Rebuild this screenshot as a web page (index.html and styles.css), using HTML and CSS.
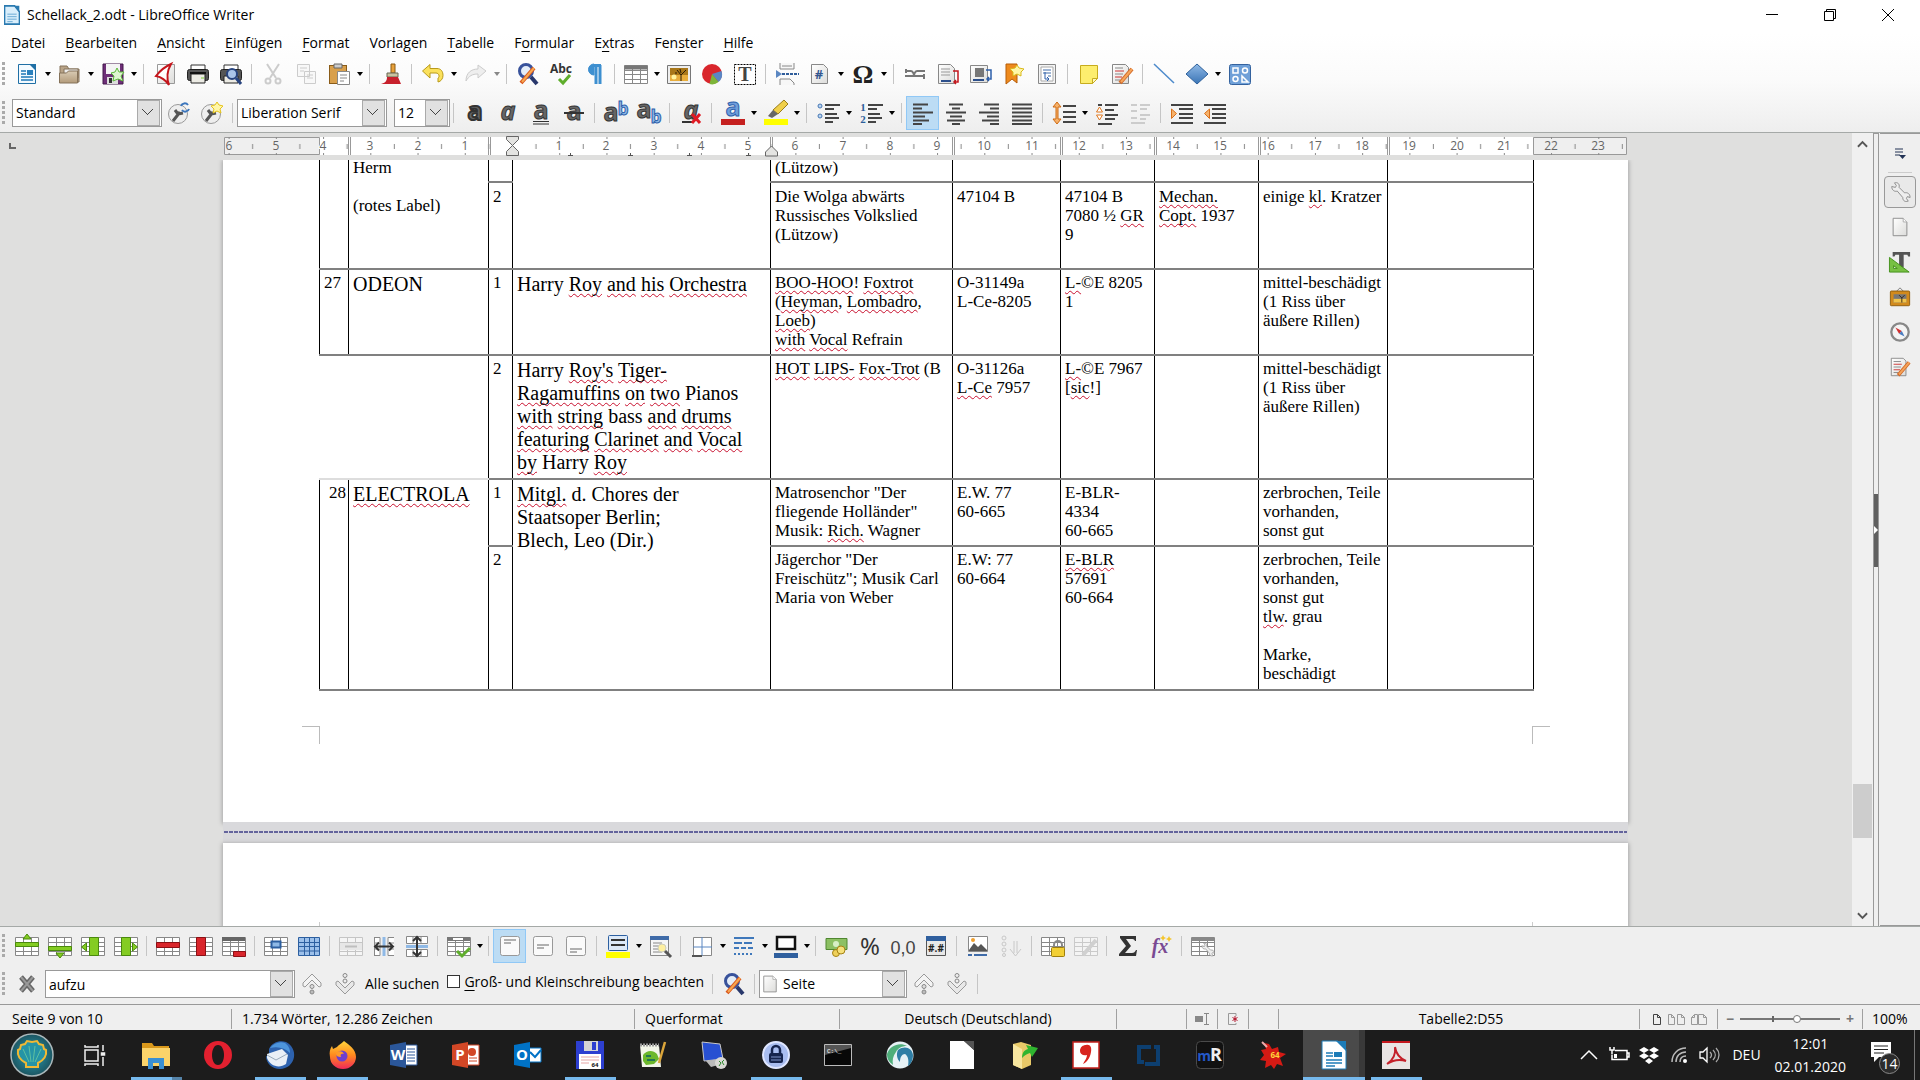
FILE: index.html
```html
<!DOCTYPE html>
<html lang="de">
<head>
<meta charset="utf-8">
<title>Schellack_2.odt - LibreOffice Writer</title>
<link rel="stylesheet" href="styles.css">
</head>
<body>
<svg class="defs" aria-hidden="true">
  <defs>
    <linearGradient id="gBlue" x1="0" y1="0" x2="0" y2="1"><stop offset="0" stop-color="#8fb9e6"/><stop offset="1" stop-color="#3a74b5"/></linearGradient>
    <linearGradient id="gTan" x1="0" y1="0" x2="0" y2="1"><stop offset="0" stop-color="#d9cbb4"/><stop offset="1" stop-color="#b39b7b"/></linearGradient>
    <linearGradient id="gPaper" x1="0" y1="0" x2="1" y2="1"><stop offset="0" stop-color="#fff"/><stop offset="1" stop-color="#dcdcda"/></linearGradient>
    <radialGradient id="gShell"><stop offset="0" stop-color="#2aa0b5"/><stop offset="1" stop-color="#1c5561"/></radialGradient>
    <linearGradient id="gFire" x1="0" y1="0" x2="0" y2="1"><stop offset="0" stop-color="#ffd43c"/><stop offset=".5" stop-color="#ff8a1e"/><stop offset="1" stop-color="#f0285a"/></linearGradient>
  </defs>
  <symbol id="grid" viewBox="0 0 24 24"><path d="M.5 3.500h23v18H.5z" fill="#fff" stroke="#888"/><path d="M.5 8.500h23M.5 12.500h23M.5 17.500h23M8.500 4v17M16.500 4v17" stroke="#888" fill="none"/></symbol>
  <symbol id="find" viewBox="0 0 24 24"><circle cx="10" cy="9" r="6.500" fill="#e4edf8" stroke="#38529b" stroke-width="3"/><path d="M15 15l6 7" stroke="#28376b" stroke-width="4"/><path d="M5 21L18 6" stroke="#d9571c" stroke-width="4"/><path d="M6 20L18 6" stroke="#f7a750" stroke-width="2"/></symbol>
  <symbol id="up" viewBox="0 0 24 24"><path d="M3 11L12 2l9 9v3l-2 1-7-7-7 7-2-1z" fill="#f4f4f4" stroke="#999"/><circle cx="12" cy="14.500" r="2" fill="#ddd" stroke="#888"/><circle cx="12" cy="20" r="2" fill="#bbb" stroke="#888"/></symbol>
  <symbol id="down" viewBox="0 0 24 24"><path d="M3 13l9 9 9-9v-3l-2-1-7 7-7-7-2 1z" fill="#e8e8e8" stroke="#999"/><circle cx="12" cy="9" r="2" fill="#eee" stroke="#888"/><circle cx="12" cy="3.500" r="2" fill="#eee" stroke="#888"/></symbol>
  <symbol id="wrench" viewBox="0 0 24 24"><path d="M3 6c0 4 3 6 6 5l6 7c0 4 3 5 6 4l-2-3 1-2 3 1c0-4-3-6-6-5l-6-6c1-4-2-6-5-5l2 3-1 2z" fill="#eee" stroke="#888"/></symbol>
  <symbol id="paper" viewBox="0 0 24 24"><path d="M4.500 2.500h11l4 4v15h-15z" fill="url(#gPaper)" stroke="#888"/><path d="M15.500 2.500v4h4" fill="#fff" stroke="#aaa"/></symbol>
  <symbol id="track" viewBox="0 0 24 24"><path d="M2.500 2.500h13l3 3v16h-16z" fill="url(#gPaper)" stroke="#888"/><path d="M5 6h8M5 12h8M5 18h5" stroke="#888"/><path d="M5 9h9M5 15h7" stroke="#c33"/><path d="M10 21L22 7" stroke="#d36a28" stroke-width="4"/><path d="M11 20L22 7" stroke="#f5a45a" stroke-width="2"/></symbol>
  <symbol id="writer" viewBox="0 0 24 24"><path d="M3.500 2.500h12l5 5v14h-17z" fill="#f3faff" stroke="#1f6fa5"/><path d="M14 2l7 7V2z" fill="#1f6fa5"/><path d="M6 9h5M6 12h5M6 15h12M6 18h12" stroke="#1f78b8" stroke-width="1.500"/><path d="M12 8h6v5h-6z" fill="#2a80bd"/></symbol>
</svg>

<header class="chrome">
  <div class="titlebar">
    <svg class="app" viewBox="0 0 24 24" preserveAspectRatio="none"><path d="M1 1h15l7 7v15H1z" fill="#d9eefb" stroke="#2a7ab0" stroke-width="2"/><path d="M15 1l8 8V1z" fill="#2a7ab0"/><path d="M5 11h14M5 14h14M5 17h14M5 20h8" stroke="#4b97c8"/></svg>
    <h1>Schellack_2.odt - LibreOffice Writer</h1>
    <div class="winctl">
      <button aria-label="Minimieren"><svg viewBox="0 0 14 14"><path d="M1 6.500h12" stroke="#000"/></svg></button>
      <button aria-label="Verkleinern"><svg viewBox="0 0 14 14"><path d="M1.500 3.500h9v9h-9zM3.500 3V1.500h9v9H11" fill="none" stroke="#000"/></svg></button>
      <button aria-label="Schließen"><svg viewBox="0 0 14 14"><path d="M1 1l12 12M13 1L1 13" stroke="#000"/></svg></button>
    </div>
  </div>
  <nav class="menu">
    <a href="#"><u>D</u>atei</a><a href="#"><u>B</u>earbeiten</a><a href="#"><u>A</u>nsicht</a><a href="#"><u>E</u>infügen</a><a href="#"><u>F</u>ormat</a><a href="#">Vor<u>l</u>agen</a><a href="#"><u>T</u>abelle</a><a href="#">F<u>o</u>rmular</a><a href="#">E<u>x</u>tras</a><a href="#">Fen<u>s</u>ter</a><a href="#"><u>H</u>ilfe</a>
  </nav>
  <div class="bar">
    <i class="grip"></i>
    <button class="b"><svg viewBox="0 0 24 24"><use href="#writer"/></svg></button><button class="dd"></button>
    <button class="b"><svg viewBox="0 0 24 24"><path d="M2 20V4h7l2 3h10v13z" fill="#b8a387" stroke="#85725a"/><path d="M6 7h14v9H6z" fill="#eee" stroke="#85725a"/><path d="M1.500 11h7l2-2h9v12h-18z" fill="url(#gTan)" stroke="#85725a"/></svg></button><button class="dd"></button>
    <button class="b"><svg viewBox="0 0 24 24"><path d="M2 2h20v20H2z" fill="#6e2f78" stroke="#43184b"/><path d="M5 2h14v10H5z" fill="#f4f4f4"/><path d="M6 15h11v7H6z" fill="#ddd"/><path d="M8 16h3v5H8z" fill="#333"/><path d="M16 6l2 4 5 0-3 4 2 5-5-2-5 2 1-5-3-3 4-1z" fill="#dff5d0" stroke="#5cb83a"/></svg></button><button class="dd"></button>
    <i class="sep"></i>
    <button class="b"><svg viewBox="0 0 24 24"><path d="M4.500 2.500h17v19h-17z" fill="url(#gPaper)" stroke="#999"/><path d="M18 2C9 6 6 10 3 14c5 1 9 3 13 9-3-8-2-14 2-21z" fill="#fff" stroke="#c4161c" stroke-width="2"/></svg></button>
    <button class="b"><svg viewBox="0 0 24 24"><path d="M5 3h14v5H5z" fill="#fff" stroke="#333"/><rect x="1.500" y="7.500" width="21" height="11" rx="2" fill="#555" stroke="#222"/><path d="M5 12h14v9H5z" fill="#ecebe4" stroke="#222"/><path d="M4 11h16" stroke="#111" stroke-width="2"/><path d="M15 16h3" stroke="#7c3"/></svg></button>
    <button class="b"><svg viewBox="0 0 24 24"><path d="M5 3h14v5H5z" fill="#fff" stroke="#333"/><rect x="1.500" y="7.500" width="21" height="11" rx="2" fill="#555" stroke="#222"/><path d="M5 14h14v7H5z" fill="#ecebe4" stroke="#222"/><circle cx="13" cy="12" r="5" fill="#aac4e8" stroke="#28447f" stroke-width="2"/><path d="M17 16l5 6" stroke="#28447f" stroke-width="3"/></svg></button>
    <i class="sep"></i>
    <button class="b" disabled><svg viewBox="0 0 24 24" fill="none" stroke="#ccc" stroke-width="2"><path d="M6 2l9 14M18 2L9 16"/><circle cx="7" cy="19" r="2.500"/><circle cx="17" cy="19" r="2.500"/></svg></button>
    <button class="b" disabled><svg viewBox="0 0 24 24" fill="#f8f8f8" stroke="#ccc"><path d="M3.500 2.500h12v12h-12zM10.500 9.500h11v12h-11zM6 6h7M6 9h4M13 13h6M13 16h6"/></svg></button>
    <button class="b"><svg viewBox="0 0 24 24"><rect x="2.500" y="3.500" width="17" height="18" fill="#d9a04c" stroke="#8a5c19"/><path d="M7 2h8v4H7z" fill="#ccc" stroke="#666"/><path d="M10.500 9.500h12v13h-12z" fill="#fff" stroke="#888"/><path d="M13 13h7M13 16h7M13 19h4" stroke="#888"/></svg></button><button class="dd"></button>
    <i class="sep"></i>
    <button class="b"><svg viewBox="0 0 24 24"><path d="M12 2h4v9h-4z" fill="#e8a13a" stroke="#8a5a12"/><path d="M8 11h11v4H8z" fill="#c9c3a0" stroke="#665"/><path d="M8 15h11l3 7H2c4-1 6-3 6-7z" fill="#c7202c"/></svg></button>
    <i class="sep"></i>
    <button class="b"><svg viewBox="0 0 24 24"><path d="M1.500 9L9 2.500v4h7c4 0 6 3 6 7 0 3-2 6-5 6.500v-4c2-1 1-5-2-5H9v5z" fill="#fbe15c" stroke="#b99a1a"/></svg></button><button class="dd"></button>
    <button class="b" disabled><svg viewBox="0 0 24 24"><path d="M22 9l-8-6v4C7 7 2 11 2 19c3-5 6-7 12-7v4z" fill="#eee" stroke="#ccc"/></svg></button><button class="dd off"></button>
    <i class="sep"></i>
    <button class="b"><svg viewBox="0 0 24 24"><use href="#find"/></svg></button>
    <button class="b"><svg viewBox="0 0 24 24"><text x="12" y="11" class="t-abc">Abc</text><path d="M10 17l4 4 7-8" fill="none" stroke="#5fae2c" stroke-width="3"/></svg></button>
    <button class="b"><svg viewBox="0 0 24 24"><path d="M18 3v19M14 3v19M19 3.500h-7" stroke="#3d8fd0" stroke-width="3" fill="none"/><path d="M12 2a5 5 0 000 11z" fill="#3d8fd0" stroke="#3d8fd0"/></svg></button>
    <i class="sep"></i>
    <button class="b"><svg viewBox="0 0 24 24"><use href="#grid"/><path d="M.5 3.500h23v4H.5z" fill="#777"/></svg></button><button class="dd"></button>
    <button class="b"><svg viewBox="0 0 24 24"><path d="M.5 3.500h23v18H.5z" fill="#eee" stroke="#777"/><path d="M3 6h18v13H3z" fill="#a97719"/><path d="M3 13h18v6H3z" fill="#e8ad3c"/><circle cx="7" cy="15" r="2.500" fill="#fff3a0"/><path d="M14 19v-6l-4-5M14 13l5-5M14 11l-1-4M10 11H8" stroke="#2c1c05" fill="none"/></svg></button>
    <button class="b"><svg viewBox="0 0 24 24"><circle cx="12" cy="12" r="10" fill="#d9262c"/><path d="M12 12l9.500-3a10 10 0 01-3 11z" fill="#5a86c4"/><path d="M12 12l6.500 8a10 10 0 01-9 2z" fill="#7db53a"/></svg></button>
    <button class="b"><svg viewBox="0 0 24 24"><path d="M1.500 2.500h21v20h-21z" fill="#fff" stroke="#000" stroke-dasharray="2 1"/><text x="12" y="19" class="t-t">T</text></svg></button>
    <i class="sep"></i>
    <button class="b"><svg viewBox="0 0 24 24"><path d="M5 1v6h14V1M5 23v-6h10l4 4v2" fill="#f7f7f7" stroke="#888"/><path d="M7 4h10" stroke="#888"/><path d="M1 8l6 4-6 4z" fill="#5b87c2"/><path d="M7 12h17" stroke="#2f5d9b" stroke-width="2" stroke-dasharray="3 1"/></svg></button>
    <button class="b"><svg viewBox="0 0 24 24"><path d="M3.500 2.500h12l4 4v15h-16z" fill="url(#gPaper)" stroke="#888"/><text x="11" y="17" class="t-hash">#</text></svg></button><button class="dd"></button>
    <button class="b"><svg viewBox="0 0 24 24"><text x="12" y="21" class="t-omega">Ω</text></svg></button><button class="dd"></button>
    <i class="sep"></i>
    <button class="b"><svg viewBox="0 0 24 24" fill="none" stroke="#777" stroke-width="2"><path d="M2 9h6c3 0 2 5 5 5h9M2 14h7c3 0 2-5 5-5h8M3 7v4M21 12v5"/></svg></button>
    <button class="b"><svg viewBox="0 0 24 24"><path d="M2.500 2.500h12l4 4v15h-16z" fill="url(#gPaper)" stroke="#888"/><path d="M5 7h9M5 10h9M5 13h9" stroke="#999"/><path d="M5 19h10" stroke="#2c4f8b" stroke-width="2"/><path d="M17 9h5v11h-4m2-2l-2 2 2 2" fill="none" stroke="#c4161c" stroke-width="1.500"/></svg></button>
    <button class="b"><svg viewBox="0 0 24 24"><path d="M1.500 3.500h17v17h-17z" fill="url(#gPaper)" stroke="#888"/><path d="M6 6h9v9H6z" fill="#777"/><path d="M4 18h11" stroke="#2c4f8b" stroke-width="2"/><path d="M17 8h5v9h-4m2-2l-2 2 2 2" fill="none" stroke="#2c5fab" stroke-width="1.500"/></svg></button>
    <button class="b"><svg viewBox="0 0 24 24"><path d="M4 2h11v19l-5-4-6 5z" fill="#ee8a1d" stroke="#b65c08"/><path d="M15 3l2 3 5 1-3 3 0 4-4-2-4 2 0-4-3-3 5-1z" fill="#fff6a8" stroke="#d9b91a"/></svg></button>
    <button class="b"><svg viewBox="0 0 24 24"><path d="M3.500 2.500h17v19h-17z" fill="#f3f3f3" stroke="#888"/><path d="M6 5h12v14H6z" fill="#fff" stroke="#aaa"/><path d="M8 8h8M8 11h8M13 14h3" stroke="#3f6ba8"/><path d="M10 10v7h4m-2-2l2 2-2 2" fill="none" stroke="#2c5fab"/></svg></button>
    <i class="sep"></i>
    <button class="b"><svg viewBox="0 0 24 24"><path d="M3.500 3.500h17v13l-5 5h-12z" fill="#fdee6e" stroke="#c7ac1e"/><path d="M20.500 16.500h-5v5z" fill="#fff9c0" stroke="#c7ac1e"/></svg></button>
    <button class="b"><svg viewBox="0 0 24 24"><use href="#track"/></svg></button>
    <i class="sep"></i>
    <button class="b"><svg viewBox="0 0 24 24"><path d="M2 2l20 19" stroke="#4d8acb" stroke-width="1.500"/></svg></button>
    <button class="b"><svg viewBox="0 0 24 24"><path d="M12 2l11 10-11 10L1 12z" fill="url(#gBlue)" stroke="#2f619c"/></svg></button><button class="dd"></button>
    <button class="b"><svg viewBox="0 0 24 24"><rect x="1.500" y="2.500" width="21" height="20" rx="2" fill="#6fa0d8" stroke="#34629e"/><g fill="none" stroke="#fff" stroke-width="1.500"><rect x="5" y="6" width="5" height="5"/><circle cx="17" cy="8.500" r="2.500"/><circle cx="7.500" cy="17" r="2.500"/><path d="M14 14v6h6z"/></g></svg></button>
  </div>
  <div class="bar fmt">
    <i class="grip"></i>
    <span class="combo c-style"><select aria-label="Absatzvorlage"><option>Standard</option><option>Überschrift 1</option></select></span>
    <button class="b"><svg viewBox="0 0 24 24"><circle cx="11" cy="13" r="9.500" fill="#eee" stroke="#999"/><path d="M6 20l7-9M8 9l3 4 5-1" stroke="#555" stroke-width="3" fill="none"/><path d="M14 5a4 4 0 017-1m1 4a4 4 0 01-7 1" stroke="#3b76bd" stroke-width="2" fill="none"/></svg></button>
    <button class="b"><svg viewBox="0 0 24 24"><circle cx="11" cy="13" r="9.500" fill="#eee" stroke="#999"/><path d="M6 20l7-9M8 9l3 4 5-1" stroke="#555" stroke-width="3" fill="none"/><path d="M17 1l2 3 4 1-3 3 1 4-4-2-4 2 1-4-3-3 4-1z" fill="#fff6a8" stroke="#e6c41a"/></svg></button>
    <i class="sep"></i>
    <span class="combo c-font"><select aria-label="Schriftname"><option>Liberation Serif</option><option>Liberation Sans</option></select></span>
    <span class="combo c-size"><select aria-label="Schriftgröße"><option>12</option><option>14</option></select></span>
    <i class="sep"></i>
    <button class="b"><svg viewBox="0 0 24 24"><text x="12" y="19" class="t-a heavy">a</text></svg></button>
    <button class="b"><svg viewBox="0 0 24 24"><text x="12" y="19" class="t-a it">a</text></svg></button>
    <button class="b"><svg viewBox="0 0 24 24"><text x="12" y="18" class="t-a">a</text><path d="M4 20.500h16M4 23h16" stroke="#333"/></svg></button>
    <button class="b"><svg viewBox="0 0 24 24"><text x="12" y="19" class="t-a">a</text><path d="M2 12h20" stroke="#333" stroke-width="2"/></svg></button>
    <i class="sep"></i>
    <button class="b"><svg viewBox="0 0 24 24"><text x="7" y="20" class="t-a">a</text><text x="19" y="14" class="t-b">b</text></svg></button>
    <button class="b"><svg viewBox="0 0 24 24"><text x="7" y="17" class="t-a">a</text><text x="19" y="22" class="t-b">b</text></svg></button>
    <i class="sep"></i>
    <button class="b"><svg viewBox="0 0 24 24"><text x="12" y="18" class="t-a it">a</text><path d="M3 21h12" stroke="#333" stroke-width="2"/><path d="M13 13l8 9M21 13l-8 9" stroke="#e01b24" stroke-width="3"/></svg></button>
    <i class="sep"></i>
    <button class="b"><svg viewBox="0 0 24 24"><text x="12" y="15" class="t-a blue">a</text><path d="M0 18h24v6H0z" fill="#c5201f"/></svg></button><button class="dd"></button>
    <button class="b"><svg viewBox="0 0 24 24"><path d="M20 -1l4 4-10 10-5-4z" fill="#f0cf4a" stroke="#9a7d1a"/><path d="M9 9l5 4-6 4-4-2z" fill="#666"/><path d="M0 18h24v6H0z" fill="#ff0"/></svg></button><button class="dd"></button>
    <i class="sep"></i>
    <button class="b"><svg viewBox="0 0 24 24"><g stroke="#444" stroke-width="2"><path d="M9 4h15M9 8h9M9 13h12M9 17h14M9 21h8"/></g><circle cx="4" cy="5" r="2" fill="#bcd4f0" stroke="#4577b4"/><circle cx="4" cy="15" r="2" fill="#bcd4f0" stroke="#4577b4"/></svg></button><button class="dd"></button>
    <button class="b"><svg viewBox="0 0 24 24"><g stroke="#444" stroke-width="2"><path d="M9 4h15M9 8h9M9 13h12M9 17h14M9 21h8"/></g><text x="4" y="10" class="t-n">1</text><text x="4" y="22" class="t-n">2</text></svg></button><button class="dd"></button>
    <i class="sep"></i>
    <button class="b on"><svg viewBox="0 0 24 24"><path d="M2 3.500h15M2 7.500h9M2 11.500h20M2 15.500h12M2 19.500h16M2 23h9" stroke="#444" stroke-width="2"/></svg></button>
    <button class="b"><svg viewBox="0 0 24 24"><path d="M5 3.500h14M8 7.500h8M2 11.500h20M6 15.500h12M3 19.500h18M8 23h8" stroke="#444" stroke-width="2"/></svg></button>
    <button class="b"><svg viewBox="0 0 24 24"><path d="M7 3.500h15M13 7.500h9M2 11.500h20M10 15.500h12M5 19.500h17M13 23h9" stroke="#444" stroke-width="2"/></svg></button>
    <button class="b"><svg viewBox="0 0 24 24"><path d="M2 3.500h20M2 7.500h20M2 11.500h20M2 15.500h20M2 19.500h20M2 23h20" stroke="#444" stroke-width="2"/></svg></button>
    <i class="sep"></i>
    <button class="b"><svg viewBox="0 0 24 24"><path d="M11 5h13M11 11h13M11 16h13M11 21h13" stroke="#444" stroke-width="2"/><path d="M5 1l4 5H6v12h3l-4 5-4-5h3V6H1z" fill="#f6b26b" stroke="#cf6a12"/></svg></button><button class="dd"></button>
    <button class="b"><svg viewBox="0 0 24 24"><path d="M10 4h13M3 4h4M10 9h9M10 14h13M10 18h10M3 23h14" stroke="#444" stroke-width="2"/><path d="M4.500 6l3 5h-6zM4.500 19l3-5h-6z" fill="#fff" stroke="#e07820"/></svg></button>
    <button class="b" disabled><svg viewBox="0 0 24 24"><path d="M12 4h10M3 4h6M12 8h7M3 10h6M12 14h10M3 17h6M12 18h6M3 22h14" stroke="#ccc" stroke-width="2"/></svg></button>
    <i class="sep"></i>
    <button class="b"><svg viewBox="0 0 24 24"><path d="M1 4h22M9 8h14M9 13h14M9 17h14M1 22h22" stroke="#444" stroke-width="2"/><path d="M1.500 8l5 4.500-5 5z" fill="#f6b26b" stroke="#d9701a"/></svg></button>
    <button class="b"><svg viewBox="0 0 24 24"><path d="M1 4h22M9 8h14M9 13h14M9 17h14M1 22h22" stroke="#444" stroke-width="2"/><path d="M6.500 8l-5 4.500 5 5z" fill="#f6b26b" stroke="#d9701a"/></svg></button>
  </div>
</header>

<main class="work">
  <section class="pane">
    <div class="rulerrow">
      <span class="tabmark"></span>
      <svg class="ruler" width="1405" height="22" viewBox="0 0 1405 22">
        <defs><pattern id="ticks" x="289" y="0" width="47.230" height="22" patternUnits="userSpaceOnUse"><path d="M.5 1v2M.5 17v2M24 8v5" stroke="#888" fill="none"/></pattern></defs>
        <path d="M1 1h1403v18H1z" fill="#fff"/>
        <path d="M1.500 1.500h95v17h-95zM1310.500 1.500h93v17h-93z" fill="#efefef" stroke="#999"/>
        <path d="M2 1h1401v18H2z" fill="url(#ticks)"/>
        <g id="rulerNumbers"></g>
        <path d="M125.500 1v18M127.500 1v18M265.500 1v18M267.500 1v18M547.500 1v18M549.500 1v18M729.500 1v18M731.500 1v18M837.500 1v18M839.500 1v18M931.500 1v18M933.500 1v18M1035.500 1v18M1037.500 1v18M1164.500 1v18M1166.500 1v18" stroke="#999"/>
        <path d="M345 19.500h5M347.500 17v3M405 19.500h5M407.500 17v3M464 19.500h5M466.500 17v3M523 19.500h5M525.500 17v3" stroke="#555"/>
        <path d="M283.500.5h12v3l-6 6 6 6v4h-12v-4l6-6-6-6zM548.500 10l6 6v4h-12v-4z" fill="#e4e4e2" stroke="#666"/>
      </svg>
    </div>
    <div class="pages">
      <article class="page first">
        <table class="doc">
          <colgroup><col class="w1"><col class="w2"><col class="w3"><col class="w4"><col class="w5"><col class="w6"><col class="w7"><col class="w8"><col class="w9"><col class="w10"></colgroup>
          <tbody>
          <tr class="r0"><td rowspan="2"></td><td rowspan="2">Herm<br><br>(rotes Label)</td><td></td><td rowspan="2"></td><td>(Lützow)</td><td></td><td></td><td></td><td></td><td></td></tr>
          <tr class="r1"><td>2</td><td>Die Wolga abwärts<br>Russisches Volkslied<br>(Lützow)</td><td>47104 B</td><td>47104 B<br>7080 ½ <s>GR</s><br>9</td><td><s>Mechan.</s><br><s>Copt.</s> 1937</td><td>einige <s>kl</s>. Kratzer</td><td></td></tr>
          <tr class="r2"><td>27</td><td class="big">ODEON</td><td>1</td><td class="big">Harry <s>Roy</s> <s>and</s> <s>his</s> <s>Orchestra</s></td><td><s>BOO-HOO</s>! <s>Foxtrot</s><br>(<s>Heyman</s>, <s>Lombadro</s>,<br><s>Loeb</s>)<br><s>with</s> <s>Vocal</s> Refrain</td><td>O-31149a<br>L-Ce-8205</td><td><s>L-</s>©E 8205<br>1</td><td></td><td>mittel-beschädigt<br>(1 Riss über<br>äußere Rillen)</td><td></td></tr>
          <tr class="r3"><td class="void" colspan="2"></td><td>2</td><td class="big">Harry <s>Roy's</s> <s>Tiger-</s><br><s>Ragamuffins</s> <s>on</s> <s>two</s> Pianos<br><s>with</s> <s>string</s> bass <s>and</s> <s>drums</s><br><s>featuring</s> <s>Clarinet</s> <s>and</s> <s>Vocal</s><br><s>by</s> Harry <s>Roy</s></td><td><s>HOT</s> <s>LIPS-</s> <s>Fox-Trot</s> (B</td><td>O-31126a<br><s>L-Ce</s> 7957</td><td><s>L-</s>©E 7967<br>[<s>sic</s>!]</td><td></td><td>mittel-beschädigt<br>(1 Riss über<br>äußere Rillen)</td><td></td></tr>
          <tr class="r4"><td class="right" rowspan="2">28</td><td class="big" rowspan="2"><s>ELECTROLA</s></td><td>1</td><td class="big" rowspan="2"><s>Mitgl.</s> d. Chores der<br>Staatsoper Berlin;<br>Blech, Leo (Dir.)</td><td>Matrosenchor "Der<br>fliegende Holländer"<br>Musik: <s>Rich.</s> Wagner</td><td>E.W. 77<br>60-665</td><td>E-BLR-<br>4334<br>60-665</td><td></td><td>zerbrochen, Teile<br>vorhanden,<br>sonst gut</td><td></td></tr>
          <tr class="r5"><td>2</td><td>Jägerchor "Der<br>Freischütz"; Musik Carl<br>Maria von Weber</td><td>E.W: 77<br>60-664</td><td><s>E-BLR</s><br>57691<br>60-664</td><td></td><td>zerbrochen, Teile<br>vorhanden,<br>sonst gut<br><s>tlw</s>. grau<br><br>Marke,<br>beschädigt</td><td></td></tr>
          </tbody>
        </table>
        <div class="crops"><i class="cl"></i><i class="cr"></i></div>
      </article>
      <div class="gap"><i></i></div>
      <article class="page second"><div class="tops"></div></article>
    </div>
  </section>
  <div class="scroll">
    <button aria-label="Nach oben"><svg viewBox="0 0 12 8"><path d="M1 7l5-5 5 5" fill="none" stroke="#555" stroke-width="2"/></svg></button>
    <div class="trough"><i></i><b></b><em></em></div>
    <button aria-label="Nach unten"><svg viewBox="0 0 12 8"><path d="M1 1l5 5 5-5" fill="none" stroke="#555" stroke-width="2"/></svg></button>
  </div>
  <div class="split"><button aria-label="Seitenleiste ausblenden"></button></div>
  <aside class="side">
    <button class="set" aria-label="Einstellungen"><svg viewBox="0 0 12 12"><path d="M1 2h8M1 5h8M1 8h5" stroke="#235"/><path d="M5 8h7l-3.500 4z" fill="#235"/></svg></button>
    <button class="tab cur" aria-label="Eigenschaften"><svg viewBox="0 0 24 24"><use href="#wrench"/></svg></button>
    <button class="tab" aria-label="Seite"><svg viewBox="0 0 24 24"><use href="#paper"/></svg></button>
    <button class="tab" aria-label="Vorlagen"><svg viewBox="0 0 24 24"><path d="M4 1h19v5h-2l-1-2h-4v14h-5V4H7L6 6H4z" fill="#555"/><path d="M.5 7v16H22zM5 16v3h4z" fill="#77c043" stroke="#3f8e16" fill-rule="evenodd"/></svg></button>
    <button class="tab" aria-label="Galerie"><svg viewBox="0 0 24 24"><path d="M8 6l4-4 4 4" fill="none" stroke="#777"/><rect x="1.500" y="5.500" width="21" height="16" rx="1" fill="#d28a1c" stroke="#8b5a0c"/><path d="M5 9h14v9H5z" fill="#777"/><path d="M5 14h14v4H5z" fill="#f0c34a"/><path d="M14 18v-5l-3-3m3 3l3-3" stroke="#321" fill="none"/></svg></button>
    <button class="tab" aria-label="Navigator"><svg viewBox="0 0 24 24"><circle cx="12" cy="12" r="9.500" fill="#f4f4f4" stroke="#888" stroke-width="2.500"/><path d="M7 7l7 4-3 3z" fill="#d0302f"/><path d="M17 17l-6-3 3-3z" fill="#4a7cc0"/></svg></button>
    <button class="tab" aria-label="Änderungen"><svg viewBox="0 0 24 24"><use href="#track"/></svg></button>
  </aside>
</main>

<footer class="lower">
  <div class="bar tbl">
    <i class="grip"></i>
    <button class="b"><svg viewBox="0 0 24 24"><use href="#grid"/><path d="M.5 8.500h23v4H.5zM12 0l4 5H8z" fill="#84cc22" stroke="#4a8a0c"/></svg></button>
    <button class="b"><svg viewBox="0 0 24 24"><use href="#grid"/><path d="M.5 12.500h23v4H.5zM12 24l4-5H8z" fill="#84cc22" stroke="#4a8a0c"/></svg></button>
    <button class="b"><svg viewBox="0 0 24 24"><use href="#grid"/><path d="M8.500 3.500h9v18h-9zM.5 13l5-4v8z" fill="#84cc22" stroke="#4a8a0c"/></svg></button>
    <button class="b"><svg viewBox="0 0 24 24"><use href="#grid"/><path d="M7.500 3.500h9v18h-9zM23.500 13l-5-4v8z" fill="#84cc22" stroke="#4a8a0c"/></svg></button>
    <i class="sep"></i>
    <button class="b"><svg viewBox="0 0 24 24"><use href="#grid"/><path d="M.5 8.500h23v5H.5z" fill="#d9262c" stroke="#8d0f14"/></svg></button>
    <button class="b"><svg viewBox="0 0 24 24"><use href="#grid"/><path d="M7.500 3.500h9v18h-9z" fill="#d9262c" stroke="#8d0f14"/></svg></button>
    <button class="b"><svg viewBox="0 0 24 24"><use href="#grid"/><path d="M0 3h23v4H0z" fill="#666"/><path d="M11.500 17.500h12v5h-12z" fill="#d9262c" stroke="#8d0f14"/></svg></button>
    <i class="sep"></i>
    <button class="b"><svg viewBox="0 0 24 24"><use href="#grid"/><path d="M7.500 7.500h9v6h-9z" fill="#8fb9e6" stroke="#2c5fa0" stroke-width="2"/></svg></button>
    <button class="b"><svg viewBox="0 0 24 24"><path d="M1.500 3.500h21v18h-21z" fill="#9cc0ea" stroke="#2c5fa0"/><path d="M1 8.500h22M1 12.500h22M1 17h22M7.500 3v18M12.500 3v18M17.500 3v18" stroke="#2c5fa0"/></svg></button>
    <i class="sep"></i>
    <button class="b" disabled><svg viewBox="0 0 24 24"><g opacity=".4"><use href="#grid"/><path d="M1 9h22v7H1z" fill="#ddd"/><path d="M6 12.500h12" stroke="#777" stroke-width="2"/></g></svg></button>
    <button class="b"><svg viewBox="0 0 24 24"><path d="M2.500 3v18M2 3.500h6v18H2M22 3.500h-6v18h6M2 9h5M2 15h5M17 9h5M17 15h5" fill="#fff" stroke="#888"/><path d="M12 3v19" stroke="#8fb9e6" stroke-width="3"/><path d="M4 12.500h16M7 8.500l-4 4 4 4M17 8.500l4 4-4 4" stroke="#333" stroke-width="2" fill="none"/></svg></button>
    <button class="b"><svg viewBox="0 0 24 24"><path d="M1.500 2.500h21v7h-21zM1.500 15.500h21v7h-21zM8 3v6M16 3v6M8 16v6M16 16v6" fill="#fff" stroke="#888"/><path d="M1 12.500h22" stroke="#8fb9e6" stroke-width="3"/><path d="M12 3v19M8 7l4-4 4 4M8 18l4 4 4-4" stroke="#333" stroke-width="2" fill="none"/></svg></button>
    <i class="sep"></i>
    <button class="b"><svg viewBox="0 0 24 24"><use href="#grid"/><path d="M0 3h23v4H0z" fill="#777"/><path d="M6 5h10" stroke="#fff" stroke-width="2"/><path d="M10 17l5 5 8-8" fill="none" stroke="#5fae2c" stroke-width="3"/></svg></button><button class="dd"></button>
    <i class="sep"></i>
    <button class="b on"><svg viewBox="0 0 24 24"><rect x="2.500" y="2.500" width="19" height="19" rx="2" fill="#fafafa" stroke="#999"/><path d="M6 6h12M6 9h7" stroke="#666"/></svg></button>
    <button class="b"><svg viewBox="0 0 24 24"><rect x="2.500" y="2.500" width="19" height="19" rx="2" fill="#fafafa" stroke="#999"/><path d="M6 11h12M6 14h7" stroke="#666"/></svg></button>
    <button class="b"><svg viewBox="0 0 24 24"><rect x="2.500" y="2.500" width="19" height="19" rx="2" fill="#fafafa" stroke="#999"/><path d="M6 15h12M6 18h7" stroke="#666"/></svg></button>
    <i class="sep"></i>
    <button class="b"><svg viewBox="0 0 24 24"><rect x="2.500" y="1.500" width="19" height="15" rx="1" fill="#dce9f8" stroke="#2c5fa0"/><path d="M5 6h14M5 11h14" stroke="#333" stroke-width="2"/><path d="M0 18h24v6H0z" fill="#ff0"/></svg></button><button class="dd"></button>
    <button class="b"><svg viewBox="0 0 24 24"><path d="M2.500 2.500h18v19h-18z" fill="#f6f6f6" stroke="#888"/><path d="M2 2h19v4H2z" fill="#3f6ba8"/><path d="M5 9h9M5 12h6M5 15h5M5 18h9" stroke="#888"/><circle cx="14" cy="14" r="4" fill="#fff0a0" stroke="#ccb"/><path d="M17 17l6 6" stroke="#555" stroke-width="3"/></svg></button>
    <i class="sep"></i>
    <button class="b"><svg viewBox="0 0 24 24"><path d="M3.500 3.500h18v18h-18z" fill="#fff" stroke="#888"/><path d="M12 3v19M3 13h19" stroke="#5b87c2"/><path d="M2 22h10" stroke="#555" stroke-width="2"/></svg></button><button class="dd"></button>
    <button class="b"><svg viewBox="0 0 24 24" stroke="#3f78bb" stroke-width="2"><path d="M2 4h20"/><path d="M2 9h20" stroke-dasharray="8 2"/><path d="M2 14h20" stroke-dasharray="5 2"/><path d="M2 20h20" stroke-dasharray="2 2"/></svg></button><button class="dd"></button>
    <button class="b"><svg viewBox="0 0 24 24"><path d="M3 3h18v12H3z" fill="#fff" stroke="#111" stroke-width="2.500"/><path d="M0 19h24v5H0z" fill="#2f5f9e"/></svg></button><button class="dd"></button>
    <i class="sep"></i>
    <button class="b"><svg viewBox="0 0 24 24"><path d="M1 4.500h21v11H1z" fill="#8cc063" stroke="#4f8730"/><circle cx="11" cy="10" r="3" fill="#d7efc5"/><circle cx="11" cy="19" r="3.500" fill="#efd05a" stroke="#a58214"/><circle cx="16" cy="16" r="4" fill="#f6e07a" stroke="#a58214"/></svg></button>
    <button class="b"><svg viewBox="0 0 24 24"><text x="12" y="21" class="t-pc">%</text></svg></button>
    <button class="b"><svg viewBox="0 0 24 24"><text x="12" y="20" class="t-00">0,0</text></svg></button>
    <button class="b"><svg viewBox="0 0 24 24"><path d="M2.500 2.500h19v19h-19z" fill="#e8e8e8" stroke="#555"/><path d="M2 2h20v5H2z" fill="#2f5f9e"/><text x="12" y="18" class="t-fmt">#.#</text></svg></button>
    <i class="sep"></i>
    <button class="b"><svg viewBox="0 0 24 24"><path d="M2.500 2.500h19v15h-19z" fill="#fff" stroke="#888"/><path d="M3 16l5-7 4 4 3-3 6 6v1H3z" fill="#555"/><circle cx="7" cy="6" r="2" fill="#f0a030"/><path d="M2 21h4M8 21h13" stroke="#3f6ba8" stroke-width="2"/></svg></button>
    <button class="b" disabled><svg viewBox="0 0 24 24" fill="none" stroke="#c8c8c8"><circle cx="5" cy="4" r="2"/><circle cx="5" cy="10" r="2"/><circle cx="5" cy="16" r="2"/><circle cx="5" cy="21" r="1.500"/><path d="M15 7v12M18 7v12M11 15l5.500 7 5.500-7"/></svg></button>
    <i class="sep"></i>
    <button class="b"><svg viewBox="0 0 24 24"><use href="#grid"/><path d="M13 13v-2a4 4 0 018 0v2" fill="none" stroke="#888" stroke-width="2"/><rect x="10.500" y="13.500" width="13" height="9" rx="1" fill="#f2cf35" stroke="#9f7f0c"/></svg></button>
    <button class="b" disabled><svg viewBox="0 0 24 24" opacity=".35"><use href="#grid"/><path d="M9 21L22 6" stroke="#999" stroke-width="4"/></svg></button>
    <i class="sep"></i>
    <button class="b"><svg viewBox="0 0 24 24"><path d="M4 2h16v5h-1c-1-2-2-2-4-2h-5l5 7-6 7h7c2 0 3-1 4-3h1l-1 6H3v-2l7-8-6-8z" fill="#333"/></svg></button>
    <button class="b"><svg viewBox="0 0 24 24"><text x="11" y="19" class="t-fx">fx</text><path d="M14 1l1 2 2 1-2 1-1 2-1-2-2-1 2-1zM20 2l1 2 2 1-2 1-1 2-1-2-2-1 2-1z" fill="#f4c52c"/></svg></button>
    <i class="sep"></i>
    <button class="b"><svg viewBox="0 0 24 24"><use href="#grid"/><path d="M1 3h22v4H1z" fill="#888"/><use href="#wrench" x="9" y="8" width="15" height="15"/></svg></button>
  </div>
  <form class="bar findbar">
    <i class="grip"></i>
    <button class="b" type="button" aria-label="Schließen"><svg viewBox="0 0 24 24"><path d="M6 5l12 14M18 5L6 19" stroke="#666" stroke-width="5"/><path d="M6 5l12 14M18 5L6 19" stroke="#999" stroke-width="2"/></svg></button>
    <span class="combo c-find"><input type="text" value="aufzu" aria-label="Suchen"></span>
    <button class="b" type="button"><svg viewBox="0 0 24 24"><use href="#up"/></svg></button>
    <button class="b" type="button"><svg viewBox="0 0 24 24"><use href="#down"/></svg></button>
    <button class="all" type="button">Alle suchen</button>
    <input type="checkbox" id="case"><label for="case"><u>G</u>roß- und Kleinschreibung beachten</label>
    <i class="sep"></i>
    <button class="b" type="button"><svg viewBox="0 0 24 24"><use href="#find"/></svg></button>
    <i class="sep"></i>
    <span class="combo c-nav"><svg viewBox="0 0 24 24"><use href="#paper"/></svg><select aria-label="Navigieren nach"><option>Seite</option><option>Tabelle</option></select></span>
    <button class="b" type="button"><svg viewBox="0 0 24 24"><use href="#up"/></svg></button>
    <button class="b" type="button"><svg viewBox="0 0 24 24"><use href="#down"/></svg></button>
    <i class="sep"></i>
  </form>
  <div class="status">
    <span class="s1">Seite 9 von 10</span><span class="s2">1.734 Wörter, 12.286 Zeichen</span><span class="s3">Querformat</span><span class="s4">Deutsch (Deutschland)</span><span class="s5"></span>
    <span class="s6"><svg viewBox="0 0 14 14"><path d="M0 4h8v6H0z" fill="#888"/><path d="M11.500 2v10M9 1.500h5M9 12.500h5" stroke="#888"/></svg></span>
    <span class="s6"><svg viewBox="0 0 14 14"><path d="M10 4V1.500H2.500v11H10V11" fill="none" stroke="#999"/><path d="M9 4v6M6.500 5.500l5 3M11.500 5.500l-5 3" stroke="#b3122a"/></svg></span>
    <span class="s7"></span><span class="s8">Tabelle2:D55</span>
    <span class="s9"><svg viewBox="0 0 56 12" fill="none" stroke="#999"><path d="M1.500 1.500h4l3 3v7h-7zM5.500 1.500v3h3" stroke="#444"/><path d="M16.500 1.500h3l3 3v7h-6zM19.500 1.500v3h3M25.500 1.500h4l3 3v7h-7zM29.500 1.500v3h3M39.500 4.500l3-3h3v10h-6zM42.500 1.500v3h-3M46.500 1.500h5l3 3v7h-8zM51.500 1.500v3h3"/></svg></span>
    <span class="s10"><button aria-label="Verkleinern">−</button><input type="range" min="0" max="100" value="58" aria-label="Zoom"><button aria-label="Vergrößern">+</button></span>
    <span class="s11">100%</span>
  </div>
</footer>

<nav class="task">
  <button aria-label="Start"><svg class="shell" viewBox="0 0 44 44"><circle cx="22" cy="22" r="21" fill="url(#gShell)" stroke="#a9b7ba" stroke-width="1.500"/><path d="M16 34v-4c-6-3-9-7-8-13l2-1 1-4 4-1 2-3 5 1 5-1 2 3 4 1 1 4 2 1c1 6-2 10-8 13v4z" fill="#2594a6" stroke="#f1b933" stroke-width="2"/><path d="M19 29l-6-13M21 29l-2-16M23 29l2-16M25 29l6-13" stroke="#5fc0a0"/></svg></button>
  <button aria-label="Aufgabenansicht"><svg viewBox="0 0 28 28" fill="none" stroke="#eee" stroke-width="1.500"><path d="M5 9h13v11H5zM5 4v2h13V4M5 25v-2h13v2M23 4v6M23 16v9"/><path d="M21.500 12h3v2h-3z" fill="#fff"/></svg></button>
  <button class="run multi" aria-label="Explorer"><svg viewBox="0 0 28 28"><path d="M0 2h10l2 3h15v5H0z" fill="#d9981b"/><path d="M0 7h28v18H0z" fill="#fbd36a"/><path d="M6 28V17h16v11h-5v-6h-6v6z" fill="#3a8fd2"/></svg></button>
  <button aria-label="Opera"><svg viewBox="0 0 28 28"><path fill-rule="evenodd" d="M14 0a14 14 0 100 28 14 14 0 000-28zm0 4c4 0 6 5 6 10s-2 10-6 10-6-5-6-10 2-10 6-10z" fill="#e3202f"/></svg></button>
  <button class="run" aria-label="Thunderbird"><svg viewBox="0 0 28 28"><path d="M3 8C6 1 14-1 20 1c6 3 9 9 8 15-1 7-7 12-14 12C6 28 0 22 0 15l3 1z" fill="#2d62ae"/><path d="M4 7C8 2 14 0 19 2c4 3 5 6 5 10-5-5-12-7-20-5z" fill="#4d95dc"/><path d="M1 13l15-5 6 6-2 9c-7 5-16 2-19-6z" fill="#e9eff6"/><path d="M1 14l9 5 11-6" stroke="#9ab" fill="none"/></svg></button>
  <button class="run" aria-label="Firefox"><svg viewBox="0 0 28 28"><path d="M16 0c5 4 12 8 12 16a13 12 0 01-26 0C1 11 2 8 4 5l1 3 4-2c1-2 4-3 7-6z" fill="url(#gFire)"/><circle cx="14" cy="15" r="5.500" fill="#6d3fcf"/><path d="M8 12c3-3 7-2 8 1-3-1-4 1-3 3-3 0-5-1-5-4z" fill="#ff9a28"/></svg></button>
  <button aria-label="Word"><svg viewBox="0 0 28 28"><path d="M14 4h13v20H14z" fill="#fff" stroke="#2b579a"/><path d="M17 8h8M17 11h8M17 14h8M17 17h8M17 20h8" stroke="#2b579a"/><path d="M0 4l16-3v26L0 24z" fill="#2b579a"/><text x="8" y="19" class="t-app">W</text></svg></button>
  <button aria-label="PowerPoint"><svg viewBox="0 0 28 28"><path d="M14 4h13v20H14z" fill="#fff" stroke="#d24726"/><path d="M17 17h8M17 20h8" stroke="#d24726"/><circle cx="20" cy="11" r="4" fill="#d24726"/><path d="M0 4l16-3v26L0 24z" fill="#d24726"/><text x="8" y="19" class="t-app">P</text></svg></button>
  <button aria-label="Outlook"><svg viewBox="0 0 28 28"><path d="M14 7h13v14H14z" fill="#fff" stroke="#0072c6"/><path d="M16 11l5 5 6-7" fill="none" stroke="#0072c6" stroke-width="2"/><path d="M0 4l16-3v26L0 24z" fill="#0072c6"/><text x="8" y="19" class="t-app">O</text></svg></button>
  <button class="run" aria-label="Floppy 64"><svg viewBox="0 0 28 28"><path d="M0 0h28v28H0z" fill="#2d3fd0"/><path d="M8 0h14v10H8z" fill="#d5d5d5"/><path d="M16 1h4v8h-4z" fill="#2d3fd0"/><path d="M3 13h22v15H3z" fill="#fff"/><path d="M5 16h18M5 19h18M5 22h8" stroke="#e7a6a6"/><text x="19" y="26" class="t-64">64</text></svg></button>
  <button aria-label="Notepad++"><svg viewBox="0 0 28 28"><path d="M2 4h19l2 22H4z" fill="#f2f5e8"/><path d="M2 4h19" stroke="#999" stroke-width="3" stroke-dasharray="2 1"/><path d="M5 14c4-5 10-5 14-1l2 5-5 5-8 1-3-4z" fill="#6cb82c"/><path d="M8 15h5M9 19h8" stroke="#275" stroke-width="2"/><path d="M27 1l-6 21" stroke="#dba53a" stroke-width="2.500"/></svg></button>
  <button aria-label="Remotedesktop"><svg viewBox="0 0 28 28"><path d="M2 1l18 2 3 15L4 20z" fill="#2850d2" stroke="#c8c8c8"/><path d="M6 20l13-2 3 5-11 3z" fill="#bbb"/><circle cx="21" cy="22" r="6" fill="#d8d8d4"/><path d="M19 20l2 2-2 3M24 19l-2 2 2 3" stroke="#2c8a2c" fill="none"/></svg></button>
  <button class="run" aria-label="KeePass"><svg viewBox="0 0 28 28"><circle cx="14" cy="14" r="13" fill="#a9bdf0" stroke="#dfe6ff" stroke-width="2"/><path d="M10 13V9a4 4 0 018 0v4" fill="none" stroke="#16244d" stroke-width="2.500"/><rect x="7" y="12" width="14" height="10" rx="2" fill="#16244d"/><path d="M9 16h10M9 19h10" stroke="#7f93c9"/></svg></button>
  <button aria-label="Eingabeaufforderung"><svg viewBox="0 0 28 28"><path d="M.5 3.500h27v21H.5z" fill="#080808" stroke="#bbb"/><path d="M1 4h26v3L1 14z" fill="#555"/><text x="3" y="12" class="t-cmd">C:\_</text></svg></button>
  <button aria-label="Cyberduck"><svg viewBox="0 0 28 28"><circle cx="14" cy="14" r="13.500" fill="#e6f1f5"/><path d="M1 13C4 4 14 1 21 5c-5 0-9 2-11 6-3 4-4 8-3 13-4-3-6-6-6-11z" fill="#4fae7a"/><path d="M12 9c7-5 14-2 15 5 0 5-2 9-5 11 1-6 0-10-3-12-3 0-5 3-5 8-3-3-4-8-2-12z" fill="#2f7ea5"/></svg></button>
  <button aria-label="LibreOffice"><svg viewBox="0 0 28 28"><path d="M2 0h14l10 9v19H2z" fill="#fff"/><path d="M16 0h10v9z" fill="#555"/></svg></button>
  <button aria-label="Ordner"><svg viewBox="0 0 28 28"><path d="M3 3l8-2 10 3v20l-9 4-9-4z" fill="#e8c968"/><path d="M3 3l9 5v20l-9-4z" fill="#f7e6a0"/><path d="M12 17c0-5 2-8 6-9l-2-4 12 3-6 9-2-4c-3 1-5 2-8 5z" fill="#2fb52f"/></svg></button>
  <button class="run" aria-label="Textprogramm"><svg viewBox="0 0 28 28"><path d="M1 1h26v26H1z" fill="#fff" stroke="#c4201c" stroke-width="1.500"/><path d="M14 4c4-1 6 2 5 7-1 6-4 10-8 12 2-4 4-6 4-9-4 1-7-1-7-4 0-4 3-6 6-6z" fill="#d8231d"/></svg></button>
  <button aria-label="VirtualBox"><svg viewBox="0 0 28 28"><path d="M5 6h12M5 4v17h5M11 23h13V6h-4" fill="none" stroke="#0d3f70" stroke-width="4"/></svg></button>
  <button aria-label="mRemote"><svg viewBox="0 0 28 28"><rect x=".5" y=".5" width="27" height="27" rx="4" fill="#111" stroke="#4a4a4a"/><text x="8" y="20" class="t-m">m</text><text x="20" y="20" class="t-r">R</text></svg></button>
  <button aria-label="IrfanView"><svg viewBox="0 0 28 28"><path d="M6 2l5 1 3 5 6-2 1 5 7 2-6 4 3 8-6-2-3 5-3-4-6 3 1-7-6-1 4-5-3-5 5-1z" fill="#d51a14"/><path d="M4 1l5 5" stroke="#eaa" stroke-width="2"/><text x="17" y="17" class="t-bug">64</text></svg></button>
  <button class="run active" aria-label="Writer"><svg viewBox="0 0 28 28"><path d="M2 0h16l8 8v20H2z" fill="#fff" stroke="#1c7cb8"/><path d="M16 0h10v10z" fill="#1c7cb8"/><path d="M6 12h7M6 15h7M6 19h16M6 22h16M6 25h9" stroke="#1c7cb8" stroke-width="1.500"/><path d="M14 11h8v5h-8z" fill="#1c7cb8"/></svg></button>
  <button class="run" aria-label="Acrobat"><svg viewBox="0 0 28 28"><path d="M0 0h28v28H0z" fill="#e9e4e3"/><path d="M0 0h28v2H0z" fill="#c4161c"/><path d="M5 23c6-4 9-10 8-17 1 7 4 11 11 14-7-2-13-1-19 3z" fill="none" stroke="#c4202a" stroke-width="2"/></svg></button>
  <div class="tray">
    <svg viewBox="0 0 18 18"><path d="M1 13l8-8 8 8" fill="none" stroke="#fff" stroke-width="1.500"/></svg>
    <svg viewBox="0 0 20 18"><path d="M6 4.500h12v9H3v-5M18 7h2v4h-2M1 1v3h4V1M3 4v4" fill="none" stroke="#fff" stroke-width="1.500"/><path d="M5 8h3v4H5z" fill="#fff"/></svg>
    <svg viewBox="0 0 20 18"><path d="M5 1l5 3-5 3-5-3zM15 1l5 3-5 3-5-3zM5 7l5 3-5 3-5-3zM15 7l5 3-5 3-5-3zM10 12l4 3-4 3-4-3z" fill="#fff"/></svg>
    <svg viewBox="0 0 18 18"><path d="M2 16C2 8 8 2 16 2M6 16c0-6 4-10 10-10M10 16c0-4 2-6 6-6" fill="none" stroke="#bbb" stroke-width="1.500"/><circle cx="15" cy="15" r="2" fill="#fff"/></svg>
    <svg viewBox="0 0 20 18"><path d="M1 6h3l4-4v14l-4-4H1z" fill="none" stroke="#fff" stroke-width="1.300"/><path d="M11 6c2 2 2 4 0 6M14 4c3 3 3 7 0 10M17 2c4 4 4 10 0 14" fill="none" stroke="#aaa" stroke-width="1.300"/></svg>
    <span class="lang">DEU</span>
    <time class="clock">12:01<br>02.01.2020</time>
    <button class="note" aria-label="Info-Center"><svg viewBox="0 0 22 22"><path d="M1 1h20v15H9l-5 5v-5H1z" fill="#fff"/><path d="M4 5h14M4 8.500h14M4 12h10" stroke="#222"/></svg><span>14</span></button>
  </div>
</nav>
<script src="ruler.js"></script>
</body>
</html>
```
FILE: ruler.js
```js
// Centimetre numbers on the horizontal ruler; zero is the left edge of the active column.
const group = document.getElementById('rulerNumbers');
const zero = 289;
const cm = 47.23;
for (let n = -6; n <= 23; n++) {
  if (n === 0) continue;
  const t = document.createElementNS('http://www.w3.org/2000/svg', 'text');
  t.setAttribute('x', Math.round(zero + n * cm));
  t.setAttribute('y', 14);
  t.textContent = Math.abs(n);
  group.appendChild(t);
}
```
FILE: styles.css
```css
* { box-sizing: border-box; }
html, body { height: 100%; margin: 0; }
body {
  display: flex;
  flex-direction: column;
  overflow: hidden;
  background: #efefef;
  color: #000;
  font: 14px/20px "Open Sans", "Noto Sans", sans-serif;
}
button { padding: 0; border: 0; background: none; font: inherit; color: inherit; }
svg { overflow: visible; }
.defs { position: absolute; width: 0; height: 0; }
a { color: inherit; text-decoration: none; }

/* window frame */
.chrome { border-bottom: 1px solid #a5a9a7; background: linear-gradient(#fff 25%, #fbfbfb 60%, #eee); }
.titlebar { display: flex; align-items: center; height: 29px; padding-left: 4px; background: #fff; }
.app { width: 16px; height: 20px; margin-right: 7px; }
h1 { margin: 0; font-size: 14px; font-weight: 400; flex: 1; }
.winctl { display: flex; margin-right: 3px; }
.winctl button { width: 58px; height: 29px; display: grid; place-items: center; }
.winctl svg { width: 14px; height: 14px; }
.menu { display: flex; align-items: center; height: 28px; gap: 20px; padding-left: 11px; }
u { text-decoration: underline; text-underline-offset: 3px; text-decoration-skip-ink: none; }

/* toolbars */
.bar { display: flex; align-items: center; height: 34px; }
.fmt { height: 41px; padding-top: 3px; }
.grip {
  width: 3px;
  height: 24px;
  margin: 0 5px 0 2px;
  background: repeating-linear-gradient(#aaa 0 3px, transparent 3px 5px);
}
.b { flex: none; width: 33px; height: 34px; display: grid; place-items: center; border: 1px solid transparent; }
.b svg { width: 24px; height: 24px; }
.b.on { background: #bcdcf4; border-color: #90c8f6; }
.dd { flex: none; width: 10px; height: 34px; display: grid; place-items: center; }
.dd::before { content: ""; border: 3px solid transparent; border-top: 4px solid #000; border-bottom: 0; }
.dd.off::before { border-top-color: #888; }
.tbl .dd { width: 9px; }
.sep { flex: none; width: 1px; height: 20px; margin: 0 4px; background: #c5c5c5; }
.combo { display: flex; align-items: center; height: 28px; border: 1px solid #999; background: #fff; }
.combo select, .combo input {
  flex: 1;
  min-width: 0;
  height: 26px;
  padding: 0 0 0 3px;
  border: 0;
  outline: 0;
  background: none;
  font: inherit;
  appearance: none;
}
.combo::after {
  content: "";
  flex: none;
  width: 21px;
  height: 24px;
  margin-right: 1px;
  border: 1px solid #aaa;
  background:
    linear-gradient(45deg, transparent 44%, #444 44% 58%, transparent 58%) 4px 8px / 6px 6px no-repeat,
    linear-gradient(-45deg, transparent 44%, #444 44% 58%, transparent 58%) 9px 8px / 6px 6px no-repeat,
    #e1e1e1;
}
.c-style { width: 150px; margin-left: 2px; }
.c-font { width: 150px; }
.c-size { width: 56px; margin-left: 7px; }
.c-size + .sep { margin-left: 3px; }
.c-find { width: 250px; margin-left: 2px; }
.c-nav { width: 148px; }
.c-nav svg { width: 20px; height: 20px; }

.t-abc { font: 700 12px "Open Sans", sans-serif; text-anchor: middle; fill: #333; }
.t-t { font: 700 20px "Liberation Serif", serif; text-anchor: middle; fill: #444; }
.t-hash { font: 700 13px "Open Sans", sans-serif; text-anchor: middle; fill: #34568f; }
.t-omega { font: 700 26px "Liberation Serif", serif; text-anchor: middle; fill: #222; }
.t-a { font: 700 25px "Noto Sans", sans-serif; text-anchor: middle; fill: #666; stroke: #333; }
.t-a.heavy { stroke-width: 2px; }
.t-a.it { font-style: italic; }
.t-a.blue { fill: #6f9edb; stroke: #2c5fab; }
.t-b { font: 700 17px "Noto Sans", sans-serif; text-anchor: middle; fill: #8fb9e6; stroke: #2c5fab; }
.t-n { font: 700 11px "Liberation Serif", serif; text-anchor: middle; fill: #2c5f9b; }
.t-pc { font: 24px "Noto Sans", sans-serif; text-anchor: middle; fill: #333; }
.t-00 { font: 18px "Liberation Sans", sans-serif; text-anchor: middle; fill: #444; }
.t-fmt { font: 700 10px "Open Sans", sans-serif; text-anchor: middle; fill: #222; }
.t-fx { font: italic 700 20px "Liberation Serif", serif; text-anchor: middle; fill: #7a4a93; }

/* document area */
.work { flex: 1; min-height: 0; display: grid; grid-template-columns: 1fr 21px 6px 41px; border-bottom: 1px solid #a5a9a7; }
.pane { min-width: 0; min-height: 0; display: flex; flex-direction: column; padding-right: 1px; background: #dfdfde; }
.rulerrow { display: flex; justify-content: center; height: 27px; padding-top: 3px; }
.ruler { flex: none; }
.ruler text { font: 12px "Open Sans", sans-serif; text-anchor: middle; fill: #666; stroke: #fff; stroke-width: 2px; paint-order: stroke; }
.ruler text:nth-child(-n+2), .ruler text:nth-child(n+28) { stroke: #efefef; }
.tabmark { position: absolute; left: 9px; width: 7px; height: 6px; margin-top: 7px; border: solid #666; border-width: 0 0 2px 2px; }
.pages { flex: 1; min-height: 0; overflow: hidden; display: flex; flex-direction: column; align-items: center; }
.page { flex: none; width: 1405px; background: #fff; box-shadow: 0 1px 4px 1px #a8a8a8; overflow: hidden; }
.first { height: 662px; }
.second { height: 400px; }
.doc {
  width: 1214px;
  margin: -2px 0 0 96px;
  border-collapse: collapse;
  table-layout: fixed;
  font: 17px/19px "Liberation Serif", serif;
}
.w1 { width: 29px; } .w2 { width: 140px; } .w3 { width: 24px; } .w4 { width: 258px; } .w5 { width: 182px; }
.w6 { width: 108px; } .w7 { width: 94px; } .w8 { width: 104px; } .w9 { width: 129px; } .w10 { width: 146px; }
.doc td {
  padding: 3px 0 0 4px;
  border: 1px solid #000;
  border-bottom: 2px solid #808080;
  vertical-align: top;
  white-space: nowrap;
}
.doc .big { font-size: 20px; line-height: 23px; }
.doc .right { text-align: right; padding: 3px 2px 0 0; }
.doc .void { border-left: 0; border-bottom-color: #ddd; }
.r0 { height: 24px; } .r1 { height: 87px; } .r2 { height: 86px; } .r3 { height: 124px; } .r4 { height: 67px; } .r5 { height: 144px; }
.doc .r0 td { padding-top: 0; border-top: 0; }
.doc .r1 td { padding-top: 4px; }
s { text-decoration: underline wavy #c8102e 1px; text-decoration-skip-ink: none; text-underline-offset: 2px; }
.crops { display: flex; justify-content: space-between; padding: 35px 78px 0 79px; }
.cl, .cr { width: 18px; height: 18px; border: 1px solid #bbb; border-width: 1px 1px 0 0; }
.cr { border-width: 1px 0 0 1px; }
.gap { flex: none; width: 1405px; height: 21px; padding: 9px 1px 0 1px; background: #d9d9dc; }
.gap i { display: block; height: 2px; background: repeating-linear-gradient(90deg, #64649c 0 4px, #d9d9e4 4px 5px); }
.tops { height: 4px; margin: 79px 95px 0 96px; border: solid #ccc; border-width: 0 1px; }

.scroll { display: flex; flex-direction: column; background: #f0f0f0; min-height: 0; }
.scroll button { height: 21px; display: grid; place-items: center; }
.scroll svg { width: 11px; height: 8px; }
.trough { flex: 1; display: flex; flex-direction: column; }
.trough i { flex: 630; }
.trough b { flex: 54; background: #cdcdcd; margin: 0 1px; }
.trough em { flex: 67; }
.split { display: flex; align-items: center; border: 1px solid #999; border-width: 1px 1px 0; background: #efefef; }
.split button {
  width: 6px;
  height: 73px;
  background: #606060;
  display: grid;
  place-items: center;
}
.split button::before { content: ""; border: 4px solid transparent; border-left: 4px solid #fff; border-right: 0; }
.side { display: flex; flex-direction: column; align-items: center; background: #efefef; border: 1px solid #999; border-width: 1px 0; gap: 3px; margin-left: 1px; }
.side button { display: grid; place-items: center; }
.set { width: 24px; height: 39px; border-bottom: 1px solid #ccc; }
.set svg { width: 12px; height: 12px; }
.side .tab { width: 32px; height: 32px; border: 1px solid transparent; border-radius: 4px; }
.side .cur { border-color: #999; background: #e9e9e9; }
.tab svg { width: 22px; height: 22px; }

/* lower bars */
.tbl { height: 37px; }
.findbar { height: 40px; }
.all { margin: 0 8px 0 4px; }
.findbar [type="checkbox"] { appearance: none; width: 13px; height: 13px; margin: 0 4px 6px 0; border: 1px solid #333; background: #fff; }
.findbar label { margin: 0 4px 5px 0; }
.status { display: flex; height: 26px; border-top: 1px solid #999; align-items: center; }
.status span { height: 20px; border-right: 1px solid #a0a0a0; display: flex; align-items: center; white-space: nowrap; padding-left: 12px; margin-top: 2px; }
.status .s1 { width: 232px; }
.status .s2 { width: 403px; padding-left: 10px; }
.status .s3 { width: 205px; padding-left: 10px; }
.status .s4 { width: 277px; padding: 0; justify-content: center; }
.status .s5 { width: 70px; }
.status .s6 { width: 31px; padding: 0; justify-content: center; }
.status .s6 svg { width: 14px; height: 14px; }
.status .s7 { width: 30px; }
.status .s8 { flex: 1; padding: 0 0 0 4px; justify-content: center; }
.status .s9 { width: 78px; }
.status .s9 svg { width: 56px; height: 12px; }
.status .s10 { width: 145px; padding: 0; justify-content: center; gap: 6px; color: #777; font-weight: 700; }
.status .s11 { width: 57px; padding-left: 9px; border: 0; }
[type="range"] {
  appearance: none;
  width: 100px;
  height: 14px;
  margin: 0;
  background:
    linear-gradient(#666, #666) 32px 4px / 2px 6px no-repeat,
    linear-gradient(#777, #777) 0 6px / 100% 2px no-repeat;
}
[type="range"]::-webkit-slider-thumb { appearance: none; width: 8px; height: 8px; border: 1px solid #777; border-radius: 50%; background: #fff; }

/* taskbar */
.task { display: flex; height: 50px; background: #1c1c1c; color: #fff; padding-left: 1px; }
.task > button { flex: none; width: 62px; display: grid; place-items: center; }
.task > button svg { width: 28px; height: 28px; }
.task > button .shell { width: 44px; height: 44px; }
.task > .run { background: linear-gradient(#76b9ed, #76b9ed) 50% 100% / 51px 3px no-repeat; }
.task > .multi { background: linear-gradient(90deg, #76b9ed 41px, #5583a8 41px) 50% 100% / 51px 3px no-repeat; }
.task > .active { background: linear-gradient(#76b9ed, #76b9ed) 0 100% / 100% 3px no-repeat, linear-gradient(90deg, #4a4a4a 56px, #393939 56px); }
.tray { display: flex; align-items: center; margin-left: auto; border-right: 1px solid #777; margin-right: 5px; }
.tray svg { height: 18px; width: 20px; margin-right: 10px; }
.lang { margin: 0 14px 0 3px; }
.clock { text-align: center; line-height: 23px; }
.note { display: flex; position: relative; width: 40px; height: 40px; margin: 0 12px 0 16px; align-items: center; }
.tray .note svg { width: 22px; height: 22px; margin: 0 0 6px 8px; }
.note span { position: absolute; left: 17px; top: 18px; width: 21px; height: 21px; border: 1px solid #888; border-radius: 50%; background: #2c2c2c; line-height: 19px; text-align: center; }

.t-app { font: 700 15px "Open Sans", sans-serif; text-anchor: middle; fill: #fff; }
.t-64 { font: 700 6px "Open Sans", sans-serif; text-anchor: middle; fill: #111; }
.t-cmd { font: 6px "Liberation Mono", monospace; fill: #fff; }
.t-m { font: 700 14px "Open Sans", sans-serif; text-anchor: middle; fill: #2458c8; }
.t-r { font: 700 18px "Open Sans", sans-serif; text-anchor: middle; fill: #eee; }
.t-bug { font: 700 8px "Open Sans", sans-serif; text-anchor: middle; fill: #ffd23a; }
```
